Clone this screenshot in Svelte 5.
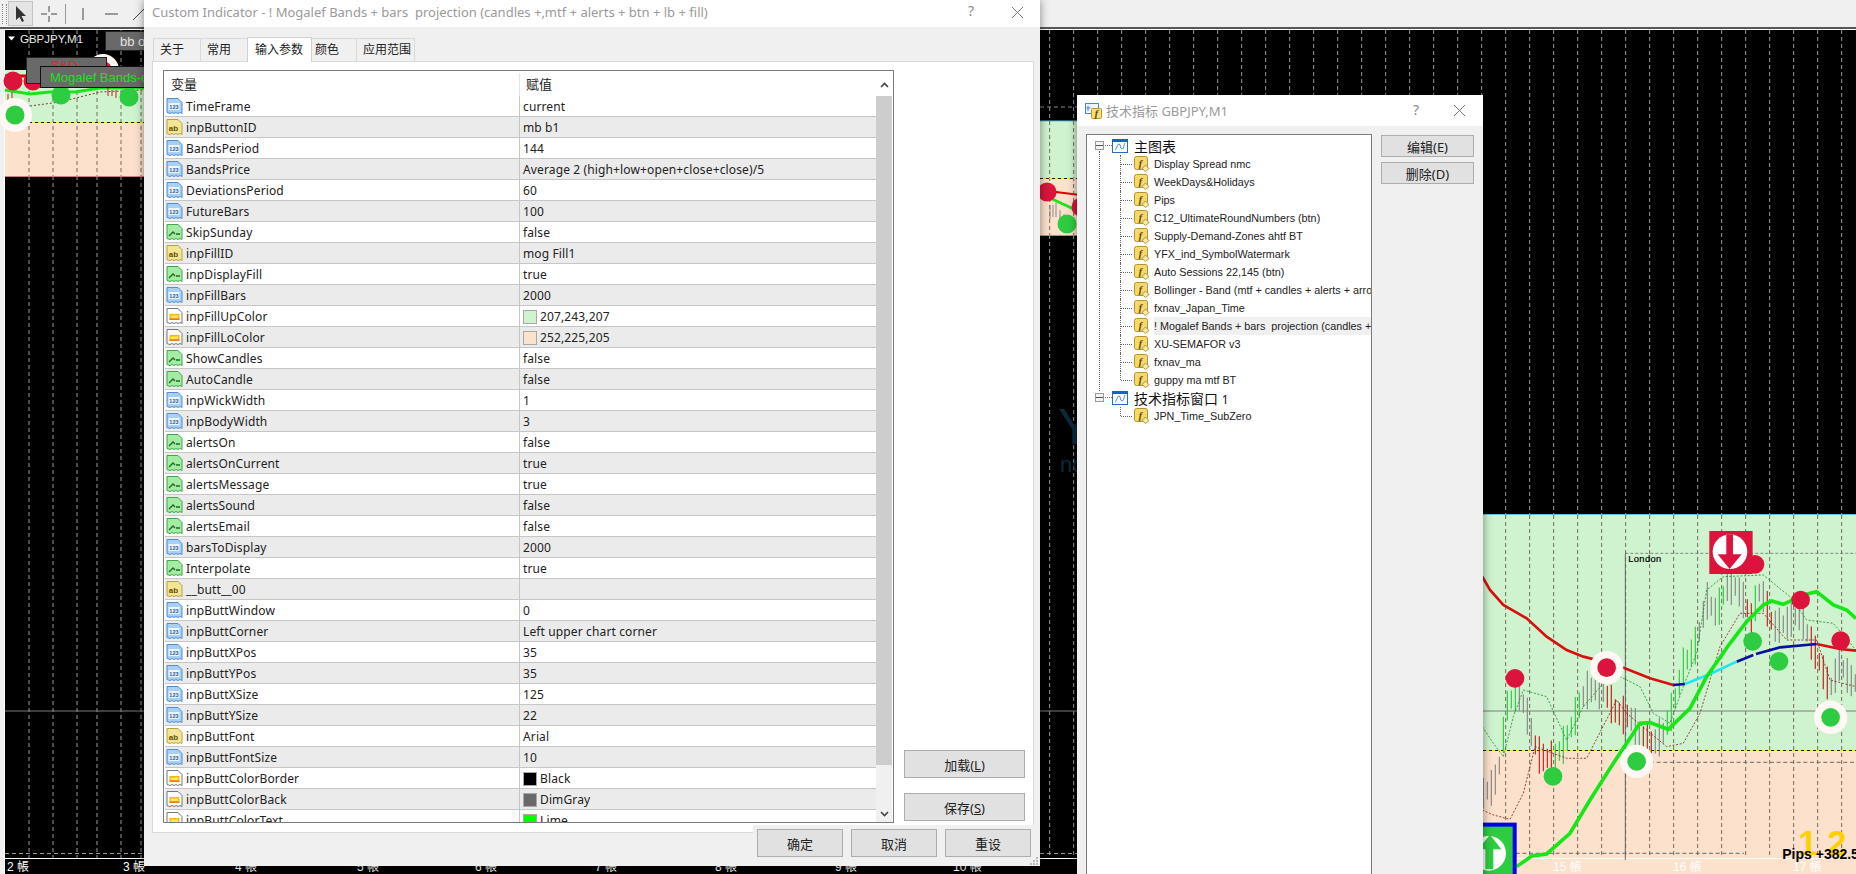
<script>
  const rows = [
    ['TimeFrame','current','n'],['inpButtonID','mb b1','a'],['BandsPeriod','144','n'],
    ['BandsPrice','Average 2 (high+low+open+close+close)/5','n'],['DeviationsPeriod','60','n'],['FutureBars','100','n'],
    ['SkipSunday','false','b'],['inpFillID','mog Fill1','a'],['inpDisplayFill','true','b'],['inpFillBars','2000','n'],
    ['inpFillUpColor','207,243,207','c','#cff3cf'],['inpFillLoColor','252,225,205','c','#fce1cd'],
    ['ShowCandles','false','b'],['AutoCandle','false','b'],['inpWickWidth','1','n'],['inpBodyWidth','3','n'],
    ['alertsOn','false','b'],['alertsOnCurrent','true','b'],['alertsMessage','true','b'],['alertsSound','false','b'],
    ['alertsEmail','false','b'],['barsToDisplay','2000','n'],['Interpolate','true','b'],['__butt__00','','a'],
    ['inpButtWindow','0','n'],['inpButtCorner','Left upper chart corner','n'],['inpButtXPos','35','n'],['inpButtYPos','35','n'],
    ['inpButtXSize','125','n'],['inpButtYSize','22','n'],['inpButtFont','Arial','a'],['inpButtFontSize','10','n'],
    ['inpButtColorBorder','Black','c','#000000'],['inpButtColorBack','DimGray','c','#696969'],['inpButtColorText','Lime','c','#00ff00']
  ];
  const tabs = [['关于',48],['常用',48],['输入参数',65],['颜色',46],['应用范围',59]];
  const mainItems = ['Display Spread nmc','WeekDays&Holidays','Pips','C12_UltimateRoundNumbers (btn)','Supply-Demand-Zones ahtf BT','YFX_ind_SymbolWatermark','Auto Sessions 22,145 (btn)','Bollinger - Band (mtf + candles + alerts + arrows)','fxnav_Japan_Time','! Mogalef Bands + bars  projection (candles +,mtf + alerts)','XU-SEMAFOR v3','fxnav_ma','guppy ma mtf BT'];

  // grid
  const xs = [29,53,77,97,121,141];
  for (let x = 1049; x < 1856; x += 24) xs.push(x + 0.67);
  function zone(x){ if (x < 144) return [70,176]; if (x < 1080) return [121,235]; if (x >= 1483) return [515,858]; return [2000,2000]; }
  const gridDark = [], gridFill = [];
  for (const x of xs) {
    const [a,b] = zone(x);
    gridDark.push([x,30,Math.min(a,858)]);
    if (b < 858) gridDark.push([x,b,858]);
    if (a < 2000) gridFill.push([x,a,b]);
  }
  const keys = [[40,880,'#c42020'],[70,860,'#888'],[90,790,'#888'],[110,620,'#2ecc40'],[140,575,'#2ecc40'],[165,620,'#888'],[190,720,'#888'],[210,770,'#c42020'],[250,780,'#c42020'],[290,720,'#2ecc40'],[330,610,'#2ecc40'],[350,570,'#888'],[400,570,'#888'],[440,640,'#c42020'],[480,650,'#c42020'],[510,710,'#888'],[550,730,'#c42020'],[580,700,'#888'],[610,620,'#2ecc40'],[640,500,'#2ecc40'],[680,430,'#2ecc40'],[710,300,'#888'],[740,340,'#888'],[770,260,'#2ecc40'],[800,260,'#888'],[830,320,'#888'],[850,370,'#c42020'],[860,270,'#2ecc40'],[880,290,'#888'],[910,380,'#c42020'],[950,370,'#888'],[990,340,'#888'],[1020,420,'#888'],[1050,490,'#c42020'],[1080,570,'#c42020'],[1110,490,'#888'],[1140,540,'#888'],[1158,550,'#888']];
  const candles = [];
  for (let X = 40; X < 1158; X += 12) {
    let i = 0; while (i < keys.length - 2 && keys[i+1][0] < X) i++;
    const [x0,y0] = keys[i], [x1,y1,c] = keys[i+1];
    const y = y0 + (y1-y0) * (X-x0)/(x1-x0);
    const h = 26 + (Math.sin(X*0.7)+1)*16;
    candles.push([X, y-h, y+h, c]);
  }
  const P = a => a.map(p => p.join(',')).join(' ');
  const red1 = P([[37,230],[60,270],[100,315],[170,355],[230,410],[290,450],[340,470],[440,495],[540,535],[610,555]]);
  const red2 = P([[1040,432],[1110,447],[1158,452]]);
  const navy = [P([[610,555],[645,552]]),P([[800,485],[850,465]]),P([[858,462],[930,442],[1040,432]])];
  const cyan = P([[645,552],[720,522],[800,485]]);
  const lime = P([[140,1100],[185,1068],[230,1062],[300,1000],[360,900],[430,790],[510,670],[540,668],[595,688],[660,625],[710,530],[780,430],[830,365],[880,315],[905,303],[940,313],[1000,285],[1040,275],[1090,315],[1130,330],[1158,355]]);
  const upBand = P([[37,680],[70,730],[100,770],[130,650],[160,570],[230,590],[290,720],[340,620],[400,550],[450,530],[510,560],[550,640],[600,670],[640,560],[680,460],[710,270],[760,230],[880,225],[960,290],[1010,360],[1090,370],[1158,450]]);
  const loBand = P([[37,930],[70,945],[120,958],[160,880],[195,740],[290,775],[350,775],[440,600],[470,640],[590,740],[640,730],[690,640],[750,440],[810,340],[880,340],[950,420],[1040,420],[1080,540],[1158,560]]);
  const axis = [[7,'2 帳'],[123,'3 帳'],[235,'4 帳'],[357,'5 帳'],[475,'6 帳'],[595,'7 帳'],[715,'8 帳'],[835,'9 帳'],[953,'10 帳'],[1553,'15 帳'],[1673,'16 帳'],[1793,'17 帳']];
</script>

{#snippet docIcon(t)}
  <svg class="ico" viewBox="0 0 17 17" aria-hidden="true">
    <path d="M1 .5h11l4 4v11l-2-1-2 1-2-1-2 1-2-1-2 1-3-1z" fill={t==='n'?'#a9cff3':t==='a'?'#f3e496':t==='b'?'#a5eaa5':'#fff'} stroke={t==='n'?'#4f8fd0':t==='a'?'#b8a23e':t==='b'?'#3fa644':'#777'} />
    {#if t==='n'}
      <rect x="2.500" y="5" width="11" height="7" fill="#eef6fd"/><text x="8" y="11" class="tiny" fill="#1d5aa6">123</text>
    {:else if t==='a'}
      <text x="7.500" y="11.500" class="ab" fill="#5d5200">ab</text>
    {:else if t==='b'}
      <path d="M3 12l4-4 2 2M10 10h4" fill="none" stroke="#1b6b22" stroke-width="1.300"/>
    {:else}
      <rect x="3.500" y="6" width="10" height="6" fill="#fdb515"/><rect x="5" y="7.500" width="7" height="2.500" fill="#ffe95a"/><rect x="3.500" y="10.500" width="10" height="1.500" fill="#f07a18"/>
    {/if}
  </svg>
{/snippet}

{#snippet fIcon()}
  <svg class="fico" viewBox="0 0 16 16" aria-hidden="true">
    <rect x=".5" y=".5" width="13" height="13" rx="2" fill="#f6d96c" stroke="#b4952f"/>
    <text x="6.500" y="11" class="fx">f</text>
    <path d="M11.500 9l3.500 3.500-3.500 3-3.500-3z" fill="#f8e9a8" stroke="#b4952f"/>
  </svg>
{/snippet}

{#snippet winIcon()}
  <svg class="wico" viewBox="0 0 16 14" aria-hidden="true">
    <rect x=".5" y=".5" width="15" height="13" fill="#fff" stroke="#2a6cc4"/>
    <rect x="0" y="0" width="16" height="3" fill="#1f5fbf"/>
    <path d="M3 11c2-1 2-6 4-6s1 5 3 5 2-5 3-6" fill="none" stroke="#3d7fd6" stroke-width="1"/>
  </svg>
{/snippet}

<div class="desk">
  <header class="toolbar">
    <span class="grip"></span>
    <span class="tool on"><svg width="14" height="18" viewBox="0 0 14 18"><path d="M2 1v14l3.500-3 2.500 5 2-1-2.500-5h4.500z" fill="#333"/></svg></span>
    <span class="tool"><svg width="18" height="18" viewBox="0 0 18 18"><path d="M9 1v6M9 11v6M1 9h6M11 9h6" stroke="#444" fill="none"/></svg></span>
    <span class="sep"></span>
    <span class="tool"><svg width="18" height="18" viewBox="0 0 18 18"><path d="M9 3v12" stroke="#444"/></svg></span>
    <span class="tool"><svg width="18" height="18" viewBox="0 0 18 18"><path d="M3 9h13" stroke="#444"/></svg></span>
    <span class="tool"><svg width="18" height="18" viewBox="0 0 18 18"><path d="M3 15L15 3" stroke="#444"/></svg></span>
  </header>

  <svg class="chart" viewBox="0 29 1856 845" width="1856" height="845">
    <rect x="4" y="29" width="1852" height="845" fill="#000"/>
    <path d="M4 29.500H1856M4.500 29V874" stroke="#fff"/>

    <!-- filled price zones -->
    <rect x="5" y="70" width="139" height="52" fill="#cff3cf"/><rect x="5" y="122" width="139" height="54" fill="#fce1cd"/>
    <rect x="1040" y="121" width="40" height="57" fill="#cff3cf"/><rect x="1040" y="178" width="40" height="57" fill="#fce1cd"/>
    <rect x="1483" y="515" width="373" height="236" fill="#cff3cf"/><rect x="1483" y="751" width="373" height="123" fill="#fce1cd"/>
    <path d="M1040 121h40M1483 514.500h373" stroke="#5fc4dc"/>
    <path d="M5 176.500h139M1040 235.500h40" stroke="#c98080"/>

    {#each gridDark as [x,a,b]}<line x1={x} x2={x} y1={a} y2={b} class="gd"/>{/each}
    {#each gridFill as [x,a,b]}<line x1={x} x2={x} y1={a} y2={b} class="gf"/>{/each}

    <path d="M5 711H144M1040 711H1080M1483 711H1856" stroke="#7d7d7d"/>
    <path d="M5 853.500H144M1040 853.500H1080" stroke="#999" stroke-dasharray="4 3"/>
    <path d="M1040 107H1080" stroke="#888" stroke-dasharray="4 3"/>
    <path d="M5 122.500H144M1040 178.500H1080M1483 750.500H1856" stroke="#1a1a1a" stroke-dasharray="3 3"/>
    <path d="M5 122.500H144M1040 178.500H1080M1483 750.500H1856" stroke="#f2e020" stroke-dasharray="3 3" stroke-dashoffset="3"/>
    <path d="M4 858.500H1856" stroke="#fff"/>

    <!-- watermark fragment -->
    <text x="1058" y="444" class="wm">Y</text>
    <text x="1060" y="472" class="wm2">nc</text>

    <!-- middle slice -->
    <polyline points="1040,190 1080,195" fill="none" stroke="#e00000" stroke-width="2"/>
    <polyline points="1050,198 1080,212" fill="none" stroke="#19e619" stroke-width="3"/>
    <path d="M1050 205v14M1053 205v12M1056 203v14M1060 210v16M1064 214v14" stroke="#888"/>
    <circle cx="1047" cy="192" r="9.500" fill="#dc143c"/><circle cx="1081" cy="207" r="9.500" fill="#dc143c"/><circle cx="1067" cy="224" r="9.500" fill="#2ecc40"/>

    <!-- top-left slice -->
    <path d="M5 76H40" stroke="#e00000" stroke-width="3"/>
    <polyline points="5,90 30,94 50,92 75,92 100,88 144,88" fill="none" stroke="#19e619" stroke-width="3"/>
    <polyline points="30,106 60,102 100,92 144,90" fill="none" stroke="#7a3a2a" stroke-dasharray="2 2"/>
    <path d="M8 94v6M12 92v6M108 88v8M112 90v6M116 90v8" stroke="#c42020"/>
    <circle cx="13" cy="81" r="9.500" fill="#dc143c"/><circle cx="33" cy="81" r="9.500" fill="#dc143c"/>
    <circle cx="103" cy="70" r="16" fill="#fff8f4"/><circle cx="103" cy="70" r="9" fill="#dc143c"/>
    <circle cx="61" cy="95" r="9.500" fill="#2ecc40"/><circle cx="129" cy="97" r="9.500" fill="#2ecc40"/>
    <circle cx="15" cy="115" r="17" fill="#fff8f4"/><circle cx="15" cy="115" r="9.500" fill="#2ecc40"/>
    <path d="M8 36.500h7l-3.500 4z" fill="#fff"/>
    <text x="20" y="43" class="sym">GBPJPY,M1</text>
    <rect x="105.500" y="31.500" width="45" height="19" fill="#696969" stroke="#222"/>
    <text x="120" y="46" class="btn" fill="#e4e4e4">bb or</text>
    <rect x="26.500" y="57.500" width="80" height="26" fill="#696969" stroke="#222"/>
    <text x="51" y="70" class="btn" fill="#d8282c">S&amp;D</text>
    <rect x="40.500" y="66.500" width="110" height="21" fill="#696969" stroke="#111"/>
    <text x="50" y="82" class="btn" fill="#22e022">Mogalef Bands-on</text>

    <!-- right chart, drawn in 3x space -->
    <g transform="translate(1470 500) scale(.3333)">
      <path d="M466 160H1158" fill="none" stroke="#555" stroke-width="2" stroke-dasharray="9 6"/>
      <path d="M466 160V1080" stroke="#666" stroke-width="3"/>
      <path d="M500 787H1158M37 1060H822" stroke="#666" stroke-width="3" stroke-dasharray="12 8"/>
      {#each candles as [x,a,b,c]}<line x1={x} x2={x} y1={a} y2={b} stroke={c} stroke-width="3.500"/>{/each}
      <polyline points={upBand} fill="none" stroke="#1d8a2a" stroke-width="2.500" stroke-dasharray="6 5"/>
      <polyline points={loBand} fill="none" stroke="#8c1c1c" stroke-width="2.500" stroke-dasharray="6 5"/>
      <polyline points={red1} fill="none" stroke="#d80f0f" stroke-width="8"/>
      <polyline points={red2} fill="none" stroke="#d80f0f" stroke-width="8"/>
      {#each navy as p}<polyline points={p} fill="none" stroke="#0a109c" stroke-width="8"/>{/each}
      <polyline points={cyan} fill="none" stroke="#20e6f0" stroke-width="8"/>
      <polyline points={lime} fill="none" stroke="#17e617" stroke-width="11"/>

      <circle cx="135" cy="535" r="28" fill="#dc143c"/>
      <circle cx="410" cy="503" r="50" fill="#fff8f4"/><circle cx="410" cy="503" r="28" fill="#dc143c"/>
      <circle cx="992" cy="300" r="28" fill="#dc143c"/><circle cx="1112" cy="422" r="28" fill="#dc143c"/>
      <circle cx="855" cy="193" r="28" fill="#dc143c"/>
      <circle cx="249" cy="829" r="28" fill="#2ecc40"/>
      <circle cx="500" cy="784" r="50" fill="#fff8f4"/><circle cx="500" cy="784" r="28" fill="#2ecc40"/>
      <circle cx="848" cy="424" r="28" fill="#2ecc40"/><circle cx="927" cy="484" r="28" fill="#2ecc40"/>
      <circle cx="1082" cy="652" r="50" fill="#fff8f4"/><circle cx="1082" cy="652" r="28" fill="#2ecc40"/>

      <rect x="718" y="93" width="130" height="129" fill="#dc143c"/>
      <circle cx="780" cy="155" r="52" fill="#fff"/>
      <path d="M769 103h20v60h26l-36 44-36-44h26z" fill="#dc143c"/>

      <rect x="37" y="968" width="103" height="154" fill="#0000f0"/>
      <rect x="37" y="980" width="91" height="142" fill="#2ecc40"/>
      <circle cx="56" cy="1060" r="52" fill="#fff"/>
      <path d="M60 1004l-36 44h22v60h24v-60h24z" fill="#2ecc40"/>
      <text x="475" y="186" class="lon">London</text>
      <text x="985" y="1066" class="big">1 2</text>
      <text x="937" y="1078" class="pips">Pips +382.5</text>
    </g>

    {#each axis as [x,t]}<text x={x} y="871" class="ax">{t}</text>{/each}
  </svg>

  <!-- Custom Indicator window -->
  <section class="win w1">
    <div class="title t1">
      <span class="ttl">Custom Indicator - ! Mogalef Bands + bars  projection (candles +,mtf + alerts + btn + lb + fill)</span>
      <span class="help h1">?</span>
      <svg class="close c1" width="13" height="13" viewBox="0 0 13 13"><path d="M1 1l11 11M12 1L1 12" stroke="#777" fill="none"/></svg>
    </div>
    <nav class="tabs">
      {#each tabs as [t,w],i}
        <span class="tab" class:act={i===2} class:tight={i===3} style:width="{w}px">{t}</span>
      {/each}
    </nav>
    <div class="panel">
      <div class="list">
        <div class="thead"><span class="hc1">变量</span><span class="hc2">赋值</span></div>
        <div class="tbody">
          {#each rows as r,i}
            <div class="row" class:alt={i%2===1}>
              <span class="c-name">{@render docIcon(r[2])}<span>{r[0]}</span></span>
              <span class="c-val">{#if r[3]}<i class="sw" style:background={r[3]}></i>{/if}{r[1]}</span>
            </div>
          {/each}
        </div>
        <div class="scroll">
          <span class="arr top"><svg width="9" height="6" viewBox="0 0 9 6"><path d="M1 5l3.500-3.500L8 5" fill="none" stroke="#444" stroke-width="1.600"/></svg></span>
          <span class="thumb"></span>
          <span class="track"></span>
          <span class="arr"><svg width="9" height="6" viewBox="0 0 9 6"><path d="M1 1l3.500 3.500L8 1" fill="none" stroke="#444" stroke-width="1.600"/></svg></span>
        </div>
      </div>
      <div class="side">
        <button>加载(<u>L</u>)</button>
        <button>保存(<u>S</u>)</button>
      </div>
    </div>
    <div class="foot">
      <button>确定</button><button>取消</button><button>重设</button>
      <svg class="rgrip" width="9" height="9" viewBox="0 0 9 9"><path d="M6 0h2v2H6zM3 3h2v2H3zM6 3h2v2H6zM0 6h2v2H0zM3 6h2v2H3zM6 6h2v2H6z" fill="#bbb"/></svg>
    </div>
  </section>

  <!-- Indicators window -->
  <section class="win w2">
    <div class="title t2">
      <svg class="capico" width="18" height="18" viewBox="0 0 18 18"><rect x=".5" y="1.500" width="13" height="10" fill="#eef5fc" stroke="#4d88c4"/><path d="M3 4v5M1.500 6h4" stroke="#4d88c4"/><rect x="6.500" y="6.500" width="10" height="10" rx="1" fill="#f8df7c" stroke="#b4952f"/><text x="11.500" y="15" class="fx">f</text></svg>
      <span class="ttl">技术指标 GBPJPY,M1</span>
      <span class="help h2">?</span>
      <svg class="close c2" width="13" height="13" viewBox="0 0 13 13"><path d="M1 1l11 11M12 1L1 12" stroke="#777" fill="none"/></svg>
    </div>
    <div class="body2">
      <div class="tree">
        <div class="root"><span class="exp"></span>{@render winIcon()}<span class="rt">主图表</span></div>
        {#each mainItems as it,i}
          <div class="leaf" class:last={i===mainItems.length-1}>{@render fIcon()}<span class="lt" class:sel={i===9}>{it}</span></div>
        {/each}
        <div class="root r2"><span class="exp"></span>{@render winIcon()}<span class="rt">技术指标窗口 <small>1</small></span></div>
        <div class="leaf last">{@render fIcon()}<span class="lt">JPN_Time_SubZero</span></div>
      </div>
      <div class="acts">
        <button>编辑(E)</button>
        <button>删除(D)</button>
      </div>
    </div>
  </section>
</div>

<style>
  :global(body){margin:0;background:#f0f0f0;overflow:hidden}
  .desk{position:relative;width:1856px;height:874px;overflow:hidden;display:flex;flex-direction:column;font-family:"Noto Sans","Noto Sans CJK SC",sans-serif;color:#222}
  .toolbar{height:27px;flex:none;background:#f0f0f0;border-bottom:2px solid #555;display:flex;align-items:center;gap:5px;padding-left:2px;box-sizing:content-box}
  .grip{width:3px;height:20px;border-left:1px dotted #888;border-right:1px dotted #888;margin-right:-3px}
  .tool{width:23px;height:23px;display:flex;align-items:center;justify-content:center}
  .tool.on{background:#e4e4e4;outline:1px solid #c4c4c4}
  .sep{width:1px;height:20px;background:#999}
  .chart{display:block;flex:none}
  .gd{stroke:#9a9a9a;stroke-dasharray:4 3}
  .gf{stroke:#7a6a5c;stroke-dasharray:4 3}
  text{font-family:"Liberation Sans",sans-serif}
  .sym{font-size:11.500px;fill:#e8e8e8}
  .btn{font-size:13px}
  .wm{font-size:50px;fill:#0c2a3c}
  .wm2{font-size:22px;fill:#0c2a3c}
  .ax{font-size:12px;fill:#fff;font-family:"Liberation Sans","Noto Sans CJK TC",sans-serif}
  .lon{font-size:28px;fill:#000;letter-spacing:1px;stroke:#000;stroke-width:.6px}
  .big{font-size:104px;font-weight:700;fill:#ffd000}
  .pips{font-size:42px;font-weight:700;fill:#000}

  .win{position:absolute;background:#f0f0f0;box-shadow:0 0 9px rgba(0,0,0,.45);display:flex;flex-direction:column}
  .w1{left:144px;top:0;width:896px;height:866px}
  .w2{left:1077px;top:95px;width:406px;height:800px}
  .title{background:#fff;display:flex;align-items:center;flex:none;color:#9a9a9a;font-size:13px;position:relative}
  .t1{height:27px;padding-left:8px;box-sizing:border-box;padding-bottom:3px}
  .t2{height:31px;padding-left:8px}
  .t1 .ttl{white-space:pre}
  .capico{margin-right:3px}
  .help{position:absolute;font-size:14px;color:#888}
  .h1{left:824px;top:1px}
  .h2{left:336px;top:5px}
  .close{position:absolute}
  .c1{left:867px;top:6px}
  .c2{left:376px;top:9px}
  .tabs{display:flex;align-items:flex-end;height:34px;padding-left:9px;flex:none;box-sizing:border-box}
  .tab{height:23px;box-sizing:border-box;background:#f0f0f0;border:1px solid #d9d9d9;border-bottom:0;margin-right:-1px;font-size:12px;display:flex;align-items:center;padding:0 0 3px 6px}
  .tab.tight{padding-left:3px}
  .tab.act{height:25px;background:#fff;border-color:#d0d0d0;position:relative;z-index:1;margin-bottom:-1px;padding-left:7px}
  .panel{margin:0 6px 0 8px;height:772px;flex:none;background:#fff;border:1px solid #d9d9d9;box-sizing:border-box;display:flex;padding:8px 10px 0 10px;gap:10px}
  .list{width:731px;height:753px;box-sizing:border-box;border:1px solid #7c7c7c;padding:2px 2px 0 1px;position:relative;overflow:hidden;flex:none;display:grid;grid-template-columns:711px 16px;grid-template-rows:23px 1fr}
  .thead{grid-column:1;display:flex;align-items:center;font-size:13px;background:#fff;height:23px}
  .hc1{width:355px;padding-left:6px;box-sizing:border-box;border-right:1px solid #e4e4e4;height:100%;display:flex;align-items:center;padding-bottom:2px}
  .hc2{padding-left:6px;padding-bottom:2px}
  .tbody{grid-column:1;grid-row:2;overflow:hidden}
  .row{height:21px;box-sizing:border-box;border-bottom:1px solid #c6c6c6;display:flex;font-size:12px;letter-spacing:.13px;background:#fff}
  .row.alt{background:#ebebeb}
  .c-name{width:355px;flex:none;box-sizing:border-box;border-right:1px solid #c6c6c6;display:flex;align-items:center;gap:3px;padding-left:1px;white-space:nowrap;padding-top:1px}
  .c-val{padding:1px 0 0 3px;display:flex;align-items:center;gap:3px;white-space:nowrap}
  .ico{width:17px;height:17px;flex:none;margin-top:-1px}
  .tiny{font:700 5.500px "Liberation Sans",sans-serif;text-anchor:middle}
  .ab{font:700 8px "Liberation Sans",sans-serif;text-anchor:middle}
  .sw{display:block;width:12px;height:12px;border:1px solid #a8a8a8}
  .scroll{grid-column:2;grid-row:1 / span 2;display:flex;flex-direction:column;background:#f0f0f0}
  .arr{height:17px;flex:none;display:flex;align-items:center;justify-content:center}
  .arr.top{height:23px;background:#fff}
  .thumb{height:669px;background:#cdcdcd;flex:none}
  .track{flex:1}
  .side{display:flex;flex-direction:column;gap:15px;padding-top:680px}
  button{font:13px "Noto Sans","Noto Sans CJK SC",sans-serif;background:#e1e1e1;border:1px solid #adadad;color:#222;padding:0}
  .side button{width:121px;height:28px}
  .foot{position:relative;display:flex;gap:8px;justify-content:flex-end;padding-right:9px;margin-top:-4px}
  .foot button{width:86px;height:28px;box-shadow:0 0 0 4px #f0f0f0}
  .rgrip{position:absolute;right:1px;bottom:-9px}
  .body2{display:flex;padding:8px 9px 0 9px;gap:9px}
  .tree{width:286px;height:800px;box-sizing:border-box;background:#fff;border:1px solid #7c7c7c;padding-top:2px;flex:none;overflow:hidden;position:relative}
  .tree::before{content:"";position:absolute;left:12px;top:16px;height:240px;border-left:1px dotted #666}
  .root{height:18px;display:flex;align-items:center;position:relative;padding-left:25px;font-size:14px;color:#111}
  .rt small{font-size:12px}
  .exp{position:absolute;left:8px;top:4px;width:9px;height:9px;box-sizing:border-box;border:1px solid #999;background:linear-gradient(#0000 3px,#555 3px,#555 4px,#0000 4px),#f4f4f4;z-index:1}
  .exp::after{content:"";position:absolute;left:9px;top:3px;width:7px;border-top:1px dotted #777}
  .wico{width:16px;height:14px;margin-right:6px;flex:none}
  .leaf{height:18px;display:flex;align-items:center;padding-left:47px;position:relative;font:10.800px "Liberation Sans","Noto Sans CJK SC",sans-serif;white-space:nowrap}
  .leaf::before{content:"";position:absolute;left:33px;top:0;height:100%;border-left:1px dotted #666}
  .leaf.last::before{height:9px}
  .leaf::after{content:"";position:absolute;left:34px;top:9px;width:11px;border-top:1px dotted #666}
  .fico{width:16px;height:16px;flex:none;margin-right:4px}
  .fx{font:italic 700 10px "Liberation Serif",serif;fill:#5a4300;text-anchor:middle}
  .lt{flex:1;min-width:0;overflow:hidden;height:18px;line-height:18px;display:block;white-space:pre}
  .lt.sel{background:#f0f0f0}
  .acts{display:flex;flex-direction:column;gap:5px;margin-top:1px}
  .acts button{width:93px;height:22px}
</style>
